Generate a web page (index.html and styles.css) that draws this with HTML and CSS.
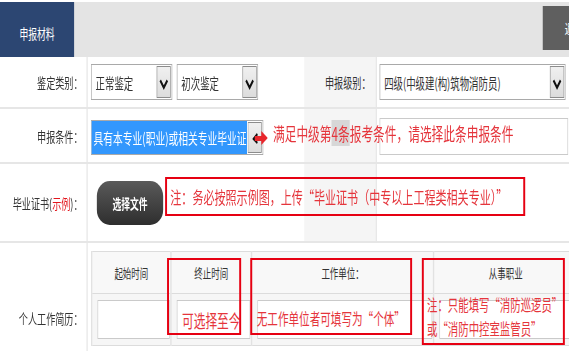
FILE: index.html
```html
<!DOCTYPE html>
<html lang="zh-CN">
<head>
    <meta charset="UTF-8">
    <meta name="viewport" content="width=device-width, initial-scale=1.0">
    <title>申报材料</title>
    <link rel="stylesheet" href="styles.css">
</head>
<body>
    <div class="page">
        <div class="top-bar">
            <div class="tab">申报材料</div>
            <div class="back-btn">返回</div>
        </div>

        <!-- 鉴定类别 / 申报级别 -->
        <div class="form-row row-type">
            <div class="label">鉴定类别：</div>
            <div class="field">
                <div class="select sel-short">
                    <span class="sel-text">正常鉴定</span>
                    <span class="sel-arrow"><svg viewBox="0 0 22 34" width="22" height="34"><polyline points="5,13 11,21 17,13" fill="none" stroke="#111" stroke-width="3"/></svg></span>
                </div>
                <div class="select sel-short">
                    <span class="sel-text">初次鉴定</span>
                    <span class="sel-arrow"><svg viewBox="0 0 22 34" width="22" height="34"><polyline points="5,13 11,21 17,13" fill="none" stroke="#111" stroke-width="3"/></svg></span>
                </div>
            </div>
            <div class="label label-alt">申报级别：</div>
            <div class="field field-right">
                <div class="select sel-long">
                    <span class="sel-text">四级(中级建(构)筑物消防员)</span>
                    <span class="sel-arrow"><svg viewBox="0 0 22 34" width="22" height="34"><polyline points="5,13 11,21 17,13" fill="none" stroke="#111" stroke-width="3"/></svg></span>
                </div>
            </div>
        </div>

        <!-- 申报条件 -->
        <div class="form-row row-cond">
            <div class="label">申报条件：</div>
            <div class="field">
                <div class="select sel-cond">
                    <span class="sel-text sel-active">具有本专业(职业)或相关专业毕业证</span>
                    <span class="sel-arrow"></span>
                </div>
            </div>
            <div class="label label-alt"></div>
            <div class="field field-right">
                <div class="text-input wide-input"></div>
            </div>

            <svg class="point-arrow" viewBox="0 0 24 14" width="24" height="14">
                <polyline points="8,3 2,8 8,12" fill="none" stroke="#111" stroke-width="2.4"/>
                <rect x="4" y="5" width="12" height="5" fill="#e8262c"/>
                <polygon points="14,0 24,7 14,14" fill="#e8262c"/>
            </svg>
            <div class="note">满足中级第<span class="hl">4条</span>报考条件，请选择此条申报条件</div>
        </div>

        <!-- 毕业证书 -->
        <div class="form-row row-file">
            <div class="label">毕业证书(<span class="red">示例</span>)：</div>
            <div class="field">
                <div class="file-btn">选择文件</div>
            </div>
            <div class="label label-alt"></div>
            <div class="field field-right"></div>

            <div class="mark mark-file">注：务必按照示例图，上传“毕业证书（中专以上工程类相关专业）”</div>
        </div>

        <!-- 个人工作简历 -->
        <div class="form-row row-resume">
            <div class="label label-top">个人工作简历：</div>
            <div class="resume">
                <div class="resume-wrap">
                    <table class="resume-table">
                        <tr>
                            <th class="c1">起始时间</th>
                            <th class="c2">终止时间</th>
                            <th class="c3">工作单位：</th>
                            <th class="c4">从事职业</th>
                        </tr>
                        <tr>
                            <td><div class="text-input"></div></td>
                            <td><div class="text-input hint">可选择至今</div></td>
                            <td><div class="text-input"></div></td>
                            <td><div class="text-input"></div></td>
                        </tr>
                    </table>

                    <div class="mark mark-end"></div>
                    <div class="mark mark-unit"><span>无工作单位者可填写为“个体”</span></div>
                    <div class="mark mark-job"><span>注：只能填写“消防巡逻员”</span><span>或“消防中控室监管员”</span></div>
                </div>
                <div class="pager">
                    <span class="pg-btn"></span>
                    <span class="pg-btn pg-wide"></span>
                </div>
            </div>
        </div>
    </div>
</body>
</html>
```

FILE: styles.css
```css
html, body {
    margin: 0;
    padding: 0;
    overflow: hidden;
    background-color: #fff;
}

body {
    font-family: "Noto Sans CJK SC", "Microsoft YaHei", sans-serif;
    color: #333;
    font-size: 14px;
}

/* 截图横向被压缩，整体按比例缩放 */
.page {
    width: 876px;
    transform: scaleX(0.65);
    transform-origin: 0 0;
}

.top-bar {
    display: flex;
    height: 55px;
    margin-top: 2px;
    background-color: #e4e4e4;
}

.tab {
    width: 114px;
    display: flex;
    align-items: center;
    justify-content: center;
    padding-top: 7px;
    box-sizing: border-box;
    background-color: #2c4672;
    color: #fff;
    font-size: 13.5px;
}

.back-btn {
    margin-left: auto;
    margin-top: 4px;
    width: 41px;
    height: 44px;
    box-sizing: border-box;
    padding: 12px 0 0 34px;
    background-color: #5f5f5f;
    color: #fff;
    white-space: nowrap;
    overflow: hidden;
}

.form-row {
    display: grid;
    grid-template-columns: 135px 333px 112px 296px;
    border-bottom: 2px solid #e6e6e6;
    position: relative;
}

.row-type { height: 50px; }
.row-cond { height: 53px; }
.row-file { height: 77px; }

.label {
    display: flex;
    align-items: center;
    justify-content: flex-end;
    padding-right: 6px;
    border-right: 2px solid #e8e8e8;
    white-space: nowrap;
}

.label-alt {
    background-color: #f5f5f5;
    padding-right: 8px;
}

.red {
    color: #e3161d;
}

.field {
    display: flex;
    align-items: center;
    gap: 7px;
    padding-left: 5px;
}

.field-right {
    padding-left: 4px;
}

.select {
    display: flex;
    height: 36px;
    box-sizing: border-box;
    border: 1px solid #a9a9a9;
    background-color: #fff;
}

.sel-short { width: 125px; }
.sel-long { width: 286px; }

.sel-cond {
    width: 265px;
    height: 35px;
    margin-top: 4px;
}

.sel-text {
    flex: 1;
    display: flex;
    align-items: center;
    padding-left: 6px;
    white-space: nowrap;
    overflow: hidden;
    font-size: 14.5px;
}

.sel-active {
    background-color: #3297fd;
    color: #fff;
    font-size: 15px;
    padding-left: 3px;
}

.sel-arrow {
    width: 22px;
    margin: 1px;
    box-sizing: border-box;
    border: 1px solid #8c8c8c;
    background: linear-gradient(#f0f0f0, #dcdcdc);
    display: flex;
}

.text-input {
    height: 39px;
    box-sizing: border-box;
    border: 1px solid #cacaca;
    background-color: #fff;
}

.wide-input {
    width: 290px;
    height: 37px;
    margin-top: 2px;
}

.point-arrow {
    position: absolute;
    left: 388px;
    top: 22px;
}

.note {
    position: absolute;
    left: 420px;
    top: 12px;
    line-height: 24px;
    font-size: 18px;
    color: #e5353c;
    white-space: nowrap;
}

.hl {
    background-color: rgba(0, 0, 0, 0.12);
}

.file-btn {
    margin-left: 9px;
    width: 102px;
    height: 44px;
    display: flex;
    align-items: center;
    justify-content: center;
    border-radius: 20px / 15px;
    background: linear-gradient(#5a5a5a, #2e2e2e);
    color: #fff;
    font-weight: bold;
    font-size: 13.5px;
}

/* 红框标注 */
.mark {
    position: absolute;
    box-sizing: border-box;
    border-style: solid;
    border-color: #e60012;
    border-width: 2px 3px;
    color: #e5353c;
    white-space: nowrap;
}

.mark-file {
    left: 254px;
    top: 13px;
    width: 554px;
    height: 39px;
    display: flex;
    align-items: center;
    padding-left: 5px;
    font-size: 17px;
}

.row-resume {
    grid-template-columns: 135px 741px;
    border-bottom: none;
    height: 120px;
}

.label-top {
    align-items: flex-start;
    padding-top: 65px;
    line-height: 20px;
}

.resume {
    padding: 8px 0 0 5px;
}

.resume-wrap {
    position: relative;
    width: 732px;
}

.resume-table {
    width: 732px;
    border-collapse: collapse;
    table-layout: fixed;
    background-color: #f6f6f6;
}

.resume-table th,
.resume-table td {
    border-top: 1px solid #dcdcdc;
    border-bottom: 1px solid #dcdcdc;
    border-left: 2px solid #e2e2e2;
    border-right: 2px solid #e2e2e2;
}

.resume-table th {
    height: 39px;
    font-weight: normal;
    font-size: 13px;
    background-color: #f8f8f8;
}

.resume-table td {
    height: 51px;
    padding: 0 1px 0 8px;
}

.c1 { width: 118px; }
.c2 { width: 120px; }
.c3 { width: 276px; }
.c4 { width: 218px; }

.hint {
    display: flex;
    align-items: center;
    padding-left: 7px;
    font-size: 18px;
    color: #e5353c;
}

.mark-end {
    left: 117px;
    top: 7px;
    width: 114px;
    height: 77px;
}

.mark-unit {
    left: 245px;
    top: 7px;
    width: 249px;
    height: 77px;
    display: flex;
    align-items: flex-end;
    padding: 0 0 4px 7px;
    font-size: 16.3px;
    line-height: 22px;
}

.mark-job {
    left: 509px;
    top: 7px;
    width: 220px;
    height: 87px;
    display: flex;
    flex-direction: column;
    justify-content: flex-end;
    padding: 0 0 3px 5px;
    font-size: 16px;
    line-height: 24px;
}

.pager {
    display: flex;
    gap: 19px;
    margin: 9px 0 0 303px;
}

.pg-btn {
    width: 23px;
    height: 10px;
    background-color: #2a2a2a;
}

.pg-wide {
    width: 26px;
}
```
